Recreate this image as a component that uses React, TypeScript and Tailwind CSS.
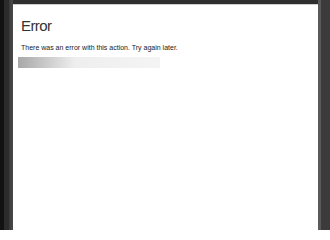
export default function App() {
  return (
    <div className="flex h-[230px] w-[330px] overflow-hidden bg-[#2e2e2e] font-['Liberation_Sans',Arial,sans-serif]">
      <div className="w-[4px] shrink-0 bg-[#121212]" />
      <div className="w-[5px] shrink-0 bg-[#2b2b2b]" />
      <div className="w-[4px] shrink-0 bg-gradient-to-r from-[#3a3a3a] to-[#4a4a4a]" />
      <div className="flex flex-1 flex-col pt-[4px]">
        <div className="flex-1 border-t border-[#cfcfcf] bg-white px-[8px] pt-[13px]">
          <h1 className="text-[15px] leading-none tracking-[-0.6px] text-[#333]">Error</h1>
          <p className="mt-[11px] text-[7px] leading-none text-[#1a1a1a]">
            There was an error with this action. Try again later.
          </p>
          <div className="mt-[6px] h-[11px] w-[142px] -ml-[3px] bg-gradient-to-r from-[#a8a8a8] via-[#eeeeee] via-40% to-[#f4f4f4]" />
        </div>
      </div>
      <div className="w-[3px] shrink-0 bg-[#5a5a5a]" />
      <div className="w-[9px] shrink-0 bg-[#3b3b3b]" />
    </div>
  );
}
